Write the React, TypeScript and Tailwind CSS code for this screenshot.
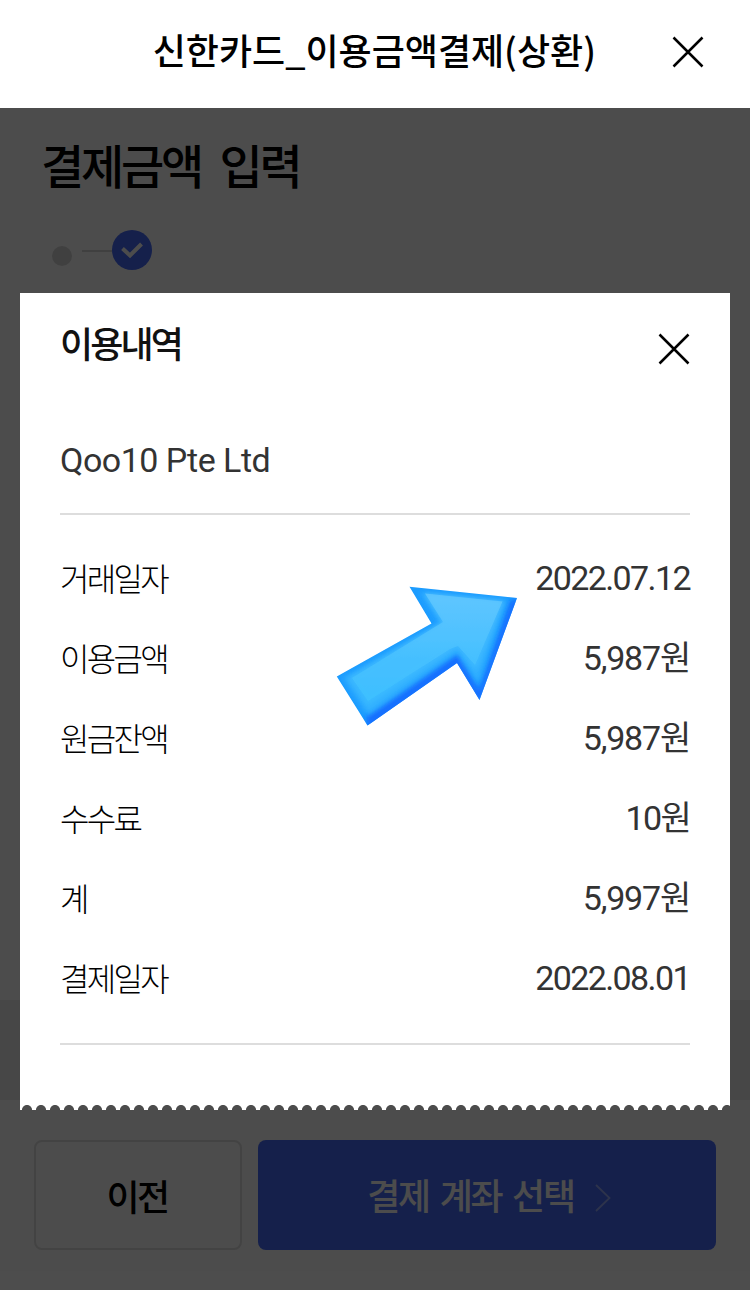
const details = [
  { label: "거래일자", value: "2022.07.12", tracking: "tracking-[-1.6px]" },
  { label: "이용금액", value: "5,987원", tracking: "tracking-[-1.2px]" },
  { label: "원금잔액", value: "5,987원", tracking: "tracking-[-1.2px]" },
  { label: "수수료", value: "10원", tracking: "tracking-[-1.7px]" },
  { label: "계", value: "5,997원", tracking: "tracking-[-1.2px]" },
  { label: "결제일자", value: "2022.08.01", tracking: "tracking-[-1.6px]" },
];

function CloseIcon() {
  return (
    <svg width="32" height="32" viewBox="0 0 32 32" fill="none">
      <path d="M1.5 1.5L30.5 30.5M30.5 1.5L1.5 30.5" stroke="#000" strokeWidth="2.5" />
    </svg>
  );
}

function Arrow() {
  return (
    <svg
      className="absolute left-[336px] top-[478px]"
      width="182"
      height="140"
      viewBox="336 586 182 140"
    >
      <defs>
        <linearGradient id="face" x1="0" y1="0" x2="0" y2="1">
          <stop offset="0" stopColor="#66c9ff" />
          <stop offset="0.6" stopColor="#4ac2ff" />
          <stop offset="1" stopColor="#40c2ff" />
        </linearGradient>
        <filter id="soft" x="-10%" y="-10%" width="120%" height="120%">
          <feGaussianBlur stdDeviation="2.6" />
        </filter>
        <filter id="slight" x="-10%" y="-10%" width="120%" height="120%">
          <feGaussianBlur stdDeviation="0.7" />
        </filter>
        <clipPath id="outline">
          <path d="M409.5 586.8L517 598L479.5 700L457 663L367.5 725.5L336.8 676.5L431.5 623.5Z" />
        </clipPath>
      </defs>
      <g clipPath="url(#outline)">
        <rect x="336" y="586" width="182" height="140" fill="#1c9cff" />
        {/* darker lower edges */}
        <path
          d="M521 598L479.5 706L457 667L367.5 731L366 716L458 653L479 690L510 601Z"
          fill="#1470ff"
          filter="url(#soft)"
        />
        <path
          d="M420 592L507 600L478 683L457 653L368 715L343 678L440 623Z"
          fill="#32b0ff"
          filter="url(#soft)"
        />
        <path
          d="M425 593.5L502.5 601.5L476 670L457.5 646L368 706L349 678L443 622Z"
          fill="url(#face)"
          opacity="0.55"
          filter="url(#soft)"
        />
        <path
          d="M425 593.5L502.5 601.5L475 665L458 646L450 649L368 701L352 678L443 622Z"
          fill="url(#face)"
          opacity="0.75"
          filter="url(#slight)"
        />
      </g>
    </svg>
  );
}

export default function App() {
  return (
    <div className="w-[750px] h-[1290px] flex flex-col overflow-hidden bg-white text-black font-['Noto_Sans_CJK_KR',sans-serif]">
      <header className="h-[108px] shrink-0 flex items-start justify-end pr-[46px] pt-[29px]">
        <h1 className="text-[36px] leading-[40px] font-medium mr-[76px] whitespace-nowrap">
          신한카드_이용금액결제(상환)
        </h1>
        <button className="mt-[7px]">
          <CloseIcon />
        </button>
      </header>

      <div className="relative flex-1 flex flex-col">
        <div className="h-[892px] px-[41px] pt-[26px]">
          <h2 className="text-[47px] leading-[60px] font-medium tracking-[-3.2px] [word-spacing:11px]">
            결제금액 입력
          </h2>
          <div className="flex items-center h-[40px] mt-[36px] pl-[11px]">
            <span className="w-5 h-5 rounded-full bg-[#d8d8d8] mt-3" />
            <span className="w-[30px] h-[2px] bg-[#d8d8d8] ml-[10px] mt-[2px]" />
            <span className="w-10 h-10 rounded-full bg-[#466bfa] flex items-center justify-center">
              <svg width="22" height="18" viewBox="0 0 22 18" fill="none">
                <path d="M1.5 7.5L9 14.5L20.5 3" stroke="#fff" strokeWidth="4" />
              </svg>
            </span>
          </div>
        </div>
        <div className="h-[100px] bg-[#eeeeee]" />
        <div className="flex gap-4 pt-[40px] pl-[34px]">
          <button className="w-[208px] h-[110px] rounded-lg border-2 border-[#e0e0e0] text-[36px] font-medium tracking-[-2.5px] pr-[2px]">
            이전
          </button>
          <button className="w-[458px] h-[110px] rounded-lg bg-[#466bfa] text-white text-[36px] font-medium tracking-[-2.3px] [word-spacing:5px] flex items-center justify-center pl-[4px] pb-[2px]">
            결제 계좌 선택
            <svg className="ml-[21px] mt-[8px]" width="16" height="28" viewBox="0 0 16 28" fill="none">
              <path d="M1 1L14.5 14L1 27" stroke="#98acfc" strokeWidth="1.8" />
            </svg>
          </button>
        </div>

        {/* dimmed layer with the usage details */}
        <div className="absolute inset-0 bg-black/70 px-5 pt-[185px]">
          <div className="h-[812px] bg-white px-10">
            <div className="flex justify-between items-start pt-[29px]">
              <h3 className="text-[36px] leading-[40px] font-medium tracking-[-2.9px] text-[#111]">
                이용내역
              </h3>
              <button className="mt-[11px]">
                <CloseIcon />
              </button>
            </div>
            <p className="mt-[73px] h-[77px] border-b-2 border-[#ddd] font-[Roboto,sans-serif] text-[34px] leading-[44px] tracking-[-0.5px] text-[#333]">
              Qoo10 Pte Ltd
            </p>
            <dl className="pt-[24px] h-[530px] border-b-2 border-[#ddd]">
              {details.map((item) => (
                <div
                  key={item.label}
                  className="flex items-center justify-between h-[80px] pb-[2px]"
                >
                  <dt className="text-[32px] font-light tracking-[-2.7px] pb-[3px]">{item.label}</dt>
                  <dd
                    className={`font-[Roboto,'Noto_Sans_CJK_KR',sans-serif] text-[34px] text-[#333] ${item.tracking}`}
                  >
                    {item.value}
                  </dd>
                </div>
              ))}
            </dl>
          </div>
          <div className="h-[5px] bg-[radial-gradient(circle_at_7px_5px,transparent_4.6px,white_5.4px)] bg-[length:14px_5px] bg-repeat-x" />
          <Arrow />
        </div>
      </div>
    </div>
  );
}
